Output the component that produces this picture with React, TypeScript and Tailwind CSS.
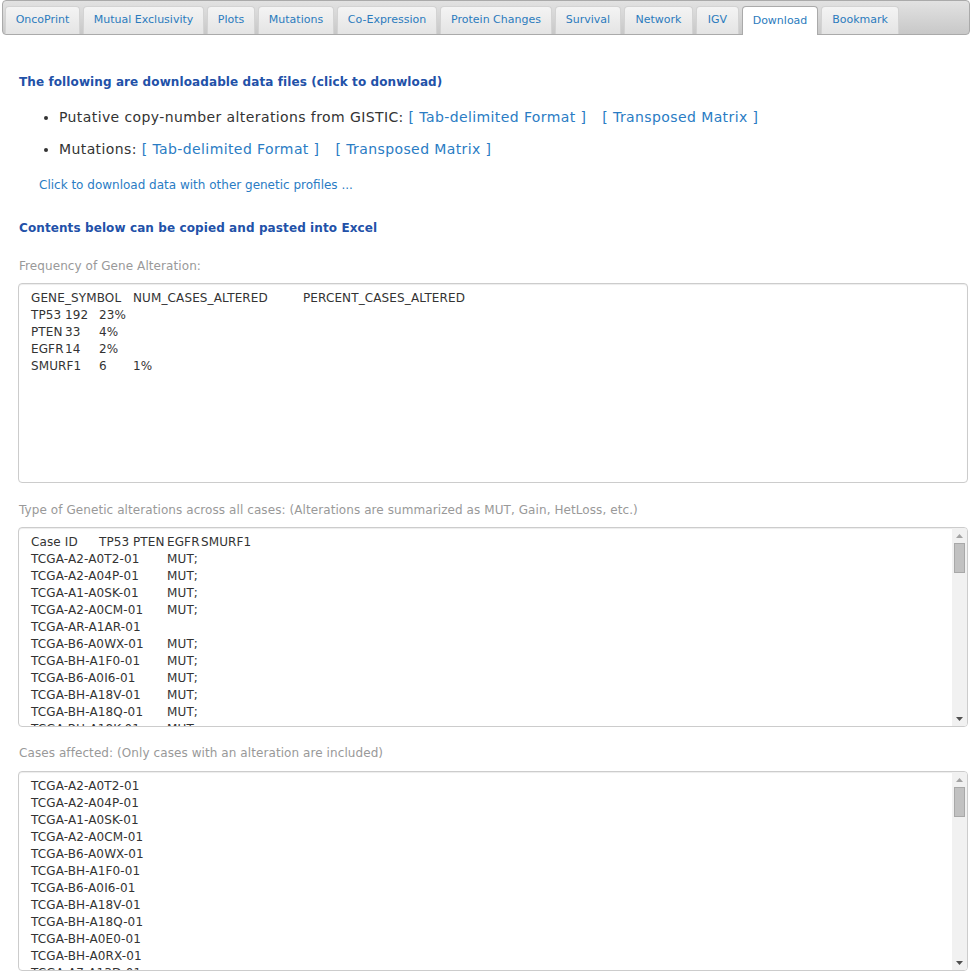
import React from 'react';

type Tab = { label: string; width: string; active?: boolean };

const tabs: Tab[] = [
  { label: 'OncoPrint', width: 'w-[75px]' },
  { label: 'Mutual Exclusivity', width: 'w-[121px]' },
  { label: 'Plots', width: 'w-[48px]' },
  { label: 'Mutations', width: 'w-[76px]' },
  { label: 'Co-Expression', width: 'w-[100px]' },
  { label: 'Protein Changes', width: 'w-[112px]' },
  { label: 'Survival', width: 'w-[66px]' },
  { label: 'Network', width: 'w-[69px]' },
  { label: 'IGV', width: 'w-[43px]' },
  { label: 'Download', width: 'w-[76px]', active: true },
  { label: 'Bookmark', width: 'w-[78px]' },
];

// each cell: text and the tab stop (34px apart) it starts at
type Cell = [string, number];
type Line = Cell[];

const TAB = 34;

const frequencyLines: Line[] = [
  [['GENE_SYMBOL', 0], ['NUM_CASES_ALTERED', 3], ['PERCENT_CASES_ALTERED', 8]],
  [['TP53', 0], ['192', 1], ['23%', 2]],
  [['PTEN', 0], ['33', 1], ['4%', 2]],
  [['EGFR', 0], ['14', 1], ['2%', 2]],
  [['SMURF1', 0], ['6', 2], ['1%', 3]],
];

const mutated = (id: string): Line => [[id, 0], ['MUT;', 4]];

const alterationLines: Line[] = [
  [['Case ID', 0], ['TP53', 2], ['PTEN', 3], ['EGFR', 4], ['SMURF1', 5]],
  mutated('TCGA-A2-A0T2-01'),
  mutated('TCGA-A2-A04P-01'),
  mutated('TCGA-A1-A0SK-01'),
  mutated('TCGA-A2-A0CM-01'),
  [['TCGA-AR-A1AR-01', 0]],
  mutated('TCGA-B6-A0WX-01'),
  mutated('TCGA-BH-A1F0-01'),
  mutated('TCGA-B6-A0I6-01'),
  mutated('TCGA-BH-A18V-01'),
  mutated('TCGA-BH-A18Q-01'),
  mutated('TCGA-BH-A18K-01'),
];

const caseLines: Line[] = [
  'TCGA-A2-A0T2-01',
  'TCGA-A2-A04P-01',
  'TCGA-A1-A0SK-01',
  'TCGA-A2-A0CM-01',
  'TCGA-B6-A0WX-01',
  'TCGA-BH-A1F0-01',
  'TCGA-B6-A0I6-01',
  'TCGA-BH-A18V-01',
  'TCGA-BH-A18Q-01',
  'TCGA-BH-A0E0-01',
  'TCGA-BH-A0RX-01',
  'TCGA-A7-A13D-01',
].map((id): Line => [[id, 0]]);

const Arrow = ({ up }: { up?: boolean }) => (
  <svg width="7" height="4" viewBox="0 0 7 4">
    {up ? (
      <path d="M3.5 0 L7 4 L0 4 Z" fill="#a3a3a3" />
    ) : (
      <path d="M0 0 L7 0 L3.5 4 Z" fill="#505050" />
    )}
  </svg>
);

const Scrollbar = () => (
  <div className="w-[15px] shrink-0 bg-[#f1f1f1] flex flex-col">
    <div className="h-[15px] flex items-center justify-center">
      <Arrow up />
    </div>
    <div className="mx-[2px] h-[30px] bg-[#c1c1c1] border border-[#a8a8a8]" />
    <div className="flex-1" />
    <div className="h-[15px] flex items-center justify-center">
      <Arrow />
    </div>
  </div>
);

const DataBox = ({ lines, scroll }: { lines: Line[]; scroll?: boolean }) => (
  <div className="h-[200px] flex border border-[#ccc] rounded-[4px] shadow-[inset_0_1px_1px_rgba(0,0,0,0.075)] overflow-hidden bg-white">
    <div className="flex-1 overflow-hidden pl-[12px] pt-[6px] text-[12px] leading-[17px] text-[#333] tracking-[0.12px]">
      {lines.map((line, i) => (
        <div key={i} className="h-[17px] whitespace-nowrap">
          {line.map(([text, stop], j) => {
            const next = line[j + 1];
            return (
              <span
                key={j}
                className="inline-block whitespace-pre"
                style={next ? { width: (next[1] - stop) * TAB } : undefined}
              >
                {text}
              </span>
            );
          })}
        </div>
      ))}
    </div>
    {scroll && <Scrollbar />}
  </div>
);

const Label = ({ children, className }: { children: React.ReactNode; className?: string }) => (
  <div className={`ml-px text-[12px] leading-[16px] text-[#999] tracking-[0.08px] ${className ?? ''}`}>
    {children}
  </div>
);

const Heading = ({ children, className }: { children: React.ReactNode; className?: string }) => (
  <div className={`ml-px text-[12px] leading-[20px] font-bold text-[#2251a8] tracking-[0.1px] ${className ?? ''}`}>
    {children}
  </div>
);

const LinkText = ({ children, className }: { children: React.ReactNode; className?: string }) => (
  <a className={`text-[#2a7cc4] cursor-pointer ${className ?? ''}`}>{children}</a>
);

export default function App() {
  return (
    <div className="min-h-screen bg-white font-['DejaVu_Sans','Liberation_Sans',sans-serif] pb-[6px]">
      {/* Tab header */}
      <div className="mx-[2px] h-[35px] border border-[#aaa] rounded-[4px] bg-linear-to-b from-[#e2e2e2] to-[#c8c8c8] flex items-end gap-[3px] pl-[2px]">
        {tabs.map((tab) =>
          tab.active ? (
            <div
              key={tab.label}
              className={`${tab.width} h-[29px] -mb-px bg-white border border-b-0 border-[#aaa] rounded-t-[4px] flex items-center justify-center text-[11px] text-[#2b7bbd]`}
            >
              {tab.label}
            </div>
          ) : (
            <div
              key={tab.label}
              className={`${tab.width} h-[28px] bg-linear-to-b from-[#f4f4f4] to-[#e4e4e4] border border-b-0 border-[#d3d3d3] rounded-t-[4px] flex items-center justify-center text-[11px] text-[#2b7bbd]`}
            >
              {tab.label}
            </div>
          )
        )}
      </div>

      {/* Download panel */}
      <div className="pl-[18px] pr-[4px]">
        <Heading className="mt-[37px]">The following are downloadable data files (click to donwload)</Heading>

        <ul className="list-disc pl-[41px] mt-[15px] text-[14px] leading-[20px] text-[#333] tracking-[0.4px]">
          <li>
            Putative copy-number alterations from GISTIC:{' '}
            <LinkText>[ Tab-delimited Format ]</LinkText>
            <LinkText className="ml-[16px]">[ Transposed Matrix ]</LinkText>
          </li>
          <li className="mt-[12px]">
            Mutations: <LinkText>[ Tab-delimited Format ]</LinkText>
            <LinkText className="ml-[16px]">[ Transposed Matrix ]</LinkText>
          </li>
        </ul>

        <div className="mt-[18px] ml-[21px] text-[12px] leading-[16px]">
          <LinkText>Click to download data with other genetic profiles ...</LinkText>
        </div>

        <Heading className="mt-[25px]">Contents below can be copied and pasted into Excel</Heading>

        <Label className="mt-[20px] mb-[9px]">Frequency of Gene Alteration:</Label>
        <DataBox lines={frequencyLines} />

        <Label className="mt-[19px] mb-[9px]">
          Type of Genetic alterations across all cases: (Alterations are summarized as MUT, Gain, HetLoss, etc.)
        </Label>
        <DataBox lines={alterationLines} scroll />

        <Label className="mt-[18px] mb-[10px]">Cases affected: (Only cases with an alteration are included)</Label>
        <DataBox lines={caseLines} scroll />
      </div>
    </div>
  );
}
